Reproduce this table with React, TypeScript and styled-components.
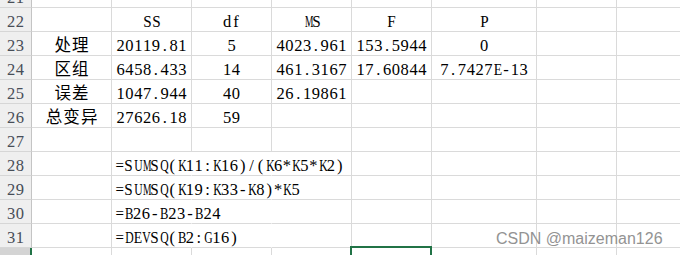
import React from "react";
import styled, { createGlobalStyle } from "styled-components";

const GlobalStyle = createGlobalStyle`
  html, body {
    margin: 0;
    padding: 0;
    background: #ffffff;
    overflow: hidden;
  }
  #root {
    position: relative;
    width: 680px;
    height: 255px;
    overflow: hidden;
  }
`;

// SimSun style: every half-width char takes the same slot
const CH = 8.82;
const FONT_PX = 16.5;
const GRID = "#dadada";
const GREEN = "#217346";
const COLS = [32, 80, 80, 80, 80, 80, 105, 80, 80];

// Times widths (em) of the wide latin letters, so they can be squeezed into a slot
const WIDE: Record<string, number> = {
  M: 0.889, W: 0.944, K: 0.722, Q: 0.722, U: 0.722, D: 0.722, G: 0.722,
  V: 0.722, B: 0.667, E: 0.611, S: 0.556, F: 0.556, P: 0.556, "=": 0.564,
};

const squeeze = (c: string) => {
  const w = WIDE[c];
  if (!w) return 1;
  return Math.min(1, (CH - 0.4) / (w * FONT_PX));
};

const Sheet = styled.div`
  display: grid;
  grid-template-columns: ${COLS.map((w) => `${w}px`).join(" ")};
  grid-template-rows: 8px;
  grid-auto-rows: 24px;
  font-family: "Liberation Serif", "Noto Sans CJK SC", serif;
  font-size: ${FONT_PX}px;
  color: #000000;
`;

const Cell = styled.div<{ $align?: "left" | "center"; $open?: boolean; $selected?: boolean }>`
  position: relative;
  box-sizing: border-box;
  display: flex;
  align-items: flex-end;
  justify-content: ${(p) => (p.$align === "left" ? "flex-start" : "center")};
  padding-left: ${(p) => (p.$align === "left" ? "3px" : "0")};
  border-bottom: 1px solid ${GRID};
  border-right: 1px solid ${(p) => (p.$open ? "transparent" : GRID)};
  line-height: 19px;
  white-space: nowrap;
  min-width: 0;

  ${(p) =>
    p.$selected &&
    `
    &::after {
      content: "";
      position: absolute;
      top: -2px;
      left: -2px;
      right: -1px;
      bottom: -2px;
      border: 2px solid ${GREEN};
    }
  `}
`;

const RowHead = styled.div<{ $active?: boolean }>`
  box-sizing: border-box;
  display: flex;
  align-items: flex-end;
  justify-content: center;
  overflow: hidden;
  background: ${(p) => (p.$active ? "#d4d4d4" : "#efefef")};
  border-bottom: 1px solid ${(p) => (p.$active ? "#d4d4d4" : "#d6d6d6")};
  border-right: ${(p) => (p.$active ? `2px solid ${GREEN}` : "1px solid #c4c4c4")};
  color: #474d57;
  line-height: 19px;
`;

const Run = styled.span`
  display: block;
  white-space: nowrap;
`;

const Glyph = styled.span<{ $wide?: boolean }>`
  display: inline-block;
  width: ${(p) => (p.$wide ? CH * 2 : CH)}px;
  text-align: center;
`;

const Watermark = styled.div`
  position: absolute;
  top: 231px;
  left: 496px;
  font-family: "Liberation Sans", Arial, sans-serif;
  font-size: 16px;
  line-height: 1;
  color: #939393;
  white-space: nowrap;
  pointer-events: none;
`;

const Mono: React.FC<{ text: string }> = ({ text }) => (
  <Run>
    {Array.from(text).map((c, i) => {
      const s = squeeze(c);
      return (
        <Glyph
          key={i}
          $wide={c.charCodeAt(0) > 0x2e80}
          style={s < 1 ? { transform: `scaleX(${s.toFixed(3)})` } : undefined}
        >
          {c}
        </Glyph>
      );
    })}
  </Run>
);

interface Row {
  num: number;
  cells: string[];
  formula?: boolean;
}

const ROWS: Row[] = [
  { num: 21, cells: [] },
  { num: 22, cells: ["", "SS", "df", "MS", "F", "P"] },
  { num: 23, cells: ["处理", "20119.81", "5", "4023.961", "153.5944", "0"] },
  { num: 24, cells: ["区组", "6458.433", "14", "461.3167", "17.60844", "7.7427E-13"] },
  { num: 25, cells: ["误差", "1047.944", "40", "26.19861"] },
  { num: 26, cells: ["总变异", "27626.18", "59"] },
  { num: 27, cells: [] },
  { num: 28, cells: ["", "=SUMSQ(K11:K16)/(K6*K5*K2)"], formula: true },
  { num: 29, cells: ["", "=SUMSQ(K19:K33-K8)*K5"], formula: true },
  { num: 30, cells: ["", "=B26-B23-B24"], formula: true },
  { num: 31, cells: ["", "=DEVSQ(B2:G16)"], formula: true },
  { num: 32, cells: [] },
];

const App: React.FC = () => {
  const colCount = COLS.length - 1;
  return (
    <>
      <GlobalStyle />
      <Sheet>
        {ROWS.map((row) => (
          <React.Fragment key={row.num}>
            <RowHead $active={row.num === 32}>
              {row.num !== 32 && <Mono text={String(row.num)} />}
            </RowHead>
            {Array.from({ length: colCount }).map((_, c) => {
              const value = row.cells[c] || "";
              const open = row.formula && (c === 1 || c === 2);
              return (
                <Cell
                  key={c}
                  $align={row.formula && c === 1 ? "left" : "center"}
                  $open={open}
                  $selected={row.num === 32 && c === 4}
                >
                  {value && <Mono text={value} />}
                </Cell>
              );
            })}
          </React.Fragment>
        ))}
      </Sheet>
      <Watermark>CSDN @maizeman126</Watermark>
    </>
  );
};

export default App;
